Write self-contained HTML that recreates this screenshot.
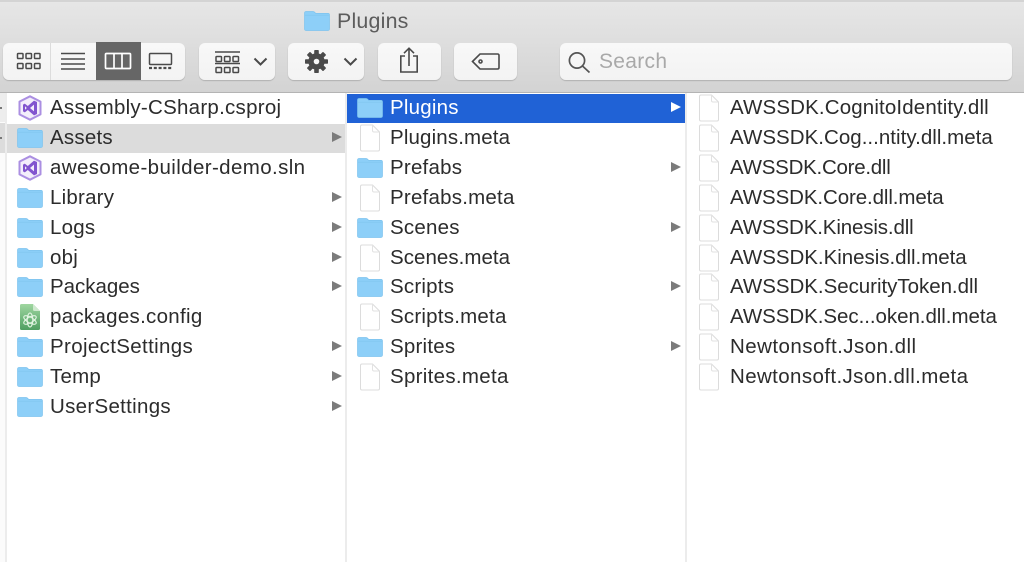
<!DOCTYPE html>
<html><head><meta charset="utf-8">
<style>
html,body{margin:0;padding:0;width:1024px;height:562px;overflow:hidden;background:#fff;font-family:"Liberation Sans",sans-serif}
#w{position:absolute;left:0;top:0;width:1024px;height:562px;overflow:hidden;background:#fff;filter:blur(.35px)}
#tb{position:absolute;left:0;top:0;width:1024px;height:92px;background:linear-gradient(#ebebeb 0,#e6e6e6 3px,#d3d3d3 100%);border-bottom:1px solid #b4b4b4}
#tb:before{content:"";position:absolute;left:0;top:0;width:1024px;height:2px;background:#d4d4d4}
.btn{position:absolute;top:43px;height:36px;background:linear-gradient(#f8f8f8,#f3f3f3);border-radius:6px;box-shadow:0 1px 1px #b0b0b0}
.abs{position:absolute}
.t{position:absolute;font-size:20.5px;line-height:30px;height:30px;margin-top:1px;color:#2c2c2c;white-space:nowrap;letter-spacing:.22px}
.c3{letter-spacing:.14px}
.ic{position:absolute}
.arr{position:absolute;width:0;height:0;border-left:10px solid #7b7b7b;border-top:5.5px solid transparent;border-bottom:5.5px solid transparent}
</style></head><body>
<svg width="0" height="0" style="position:absolute">
<defs>
<linearGradient id="gg" x1="0" y1="0" x2="0" y2="1"><stop offset="0" stop-color="#9fd6a0"/><stop offset="1" stop-color="#4f9f62"/></linearGradient>
<symbol id="folder" viewBox="0 0 26 20"><path d="M.5 2.2Q.5 .5 2.2 .5H9Q10 .5 10.8 1.4L11.6 2.4H24Q25.5 2.4 25.5 4V17.8Q25.5 19.5 24 19.5H2Q.5 19.5 .5 17.8Z" fill="#8dcff8" stroke="#7fc4ee" stroke-width=".7"/><path d="M1 4.2H25" stroke="#7fc4ee" stroke-width=".7"/></symbol>
<symbol id="doc" viewBox="0 0 22 28"><path d="M1.5 2.5Q1.5 1 3 1H13.5L20.5 8V25.5Q20.5 27 19 27H3Q1.5 27 1.5 25.5Z" fill="#fff" stroke="#dcdcdc"/><path d="M13.5 1V6.5Q13.5 8 15 8H20.5" fill="none" stroke="#e2e2e2"/></symbol>
<symbol id="vs" viewBox="0 0 24 26"><path d="M12 1.3L22.5 6.6V19.4L12 24.7L1.5 19.4V6.6Z" fill="#f3eefb" stroke="#ab8fe2" stroke-width="2" stroke-linejoin="round"/><path d="M16 5.6L19 7V19L16 20.4L9.8 15L6.8 17.4L5 16.4V9.6L6.8 8.6L9.8 11ZM16 9.6L12 13L16 16.4ZM7 11.2V14.8L8.8 13Z" fill="#8255cf" fill-rule="evenodd"/></symbol>
<symbol id="atom" viewBox="0 0 24 28"><path d="M2 2.5Q2 1 3.5 1H15L22 8V25.5Q22 27 20.5 27H3.5Q2 27 2 25.5Z" fill="url(#gg)"/><path d="M15 1V6.5Q15 8 16.5 8H22" fill="#cfe9cf"/><g fill="none" stroke="#e4f5e4" stroke-width="1.1"><ellipse cx="12" cy="17" rx="7" ry="2.8" transform="rotate(30 12 17)"/><ellipse cx="12" cy="17" rx="7" ry="2.8" transform="rotate(-30 12 17)"/><ellipse cx="12" cy="17" rx="7" ry="2.8" transform="rotate(90 12 17)"/></g></symbol>
</defs></svg>
<div id="w">
<div id="tb"></div>

<!-- title -->
<svg class="ic" style="left:304px;top:11px" width="26" height="20"><use href="#folder" width="26" height="20"/></svg>
<div class="abs" style="left:337px;top:9px;font-size:21.4px;line-height:24px;color:#5c5c5c;letter-spacing:.2px">Plugins</div>

<!-- view segmented -->
<div class="btn" style="left:3px;width:182px;height:37px"></div>
<div class="abs" style="left:50px;top:43px;width:1px;height:37px;background:#dcdcdc"></div>
<div class="abs" style="left:96px;top:42px;width:45px;height:38px;background:#666"></div>
<svg class="ic" style="left:3px;top:43px" width="182" height="37" fill="none" stroke="#4a4a4a" stroke-width="1.5">
<rect x="14.5" y="10.5" width="5.5" height="5" rx=".8"/><rect x="23" y="10.5" width="5.5" height="5" rx=".8"/><rect x="31.5" y="10.5" width="5.5" height="5" rx=".8"/>
<rect x="14.5" y="20.5" width="5.5" height="5" rx=".8"/><rect x="23" y="20.5" width="5.5" height="5" rx=".8"/><rect x="31.5" y="20.5" width="5.5" height="5" rx=".8"/>
<path d="M58 10.5H82M58 16H82M58 21H82M58 26H82"/>
<rect x="102.5" y="10.5" width="25" height="15" rx="1" stroke="#fff" stroke-width="1.7"/><path d="M111 10.5V25.5M119 10.5V25.5" stroke="#fff" stroke-width="1.7"/>
<rect x="146.5" y="10.5" width="22" height="11" rx="1"/><path d="M146 25H169" stroke-width="2.2" stroke-dasharray="3 1.8"/>
</svg>

<!-- arrange -->
<div class="btn" style="left:199px;width:76px;height:37px"></div>
<svg class="ic" style="left:199px;top:43px" width="76" height="37" fill="none" stroke="#4a4a4a" stroke-width="1.5">
<path d="M16 9H41"/>
<rect x="17" y="13.5" width="5.5" height="5" rx=".8"/><rect x="25.5" y="13.5" width="5.5" height="5" rx=".8"/><rect x="34" y="13.5" width="5.5" height="5" rx=".8"/>
<path d="M16 20.5H41"/>
<rect x="17" y="24.5" width="5.5" height="5" rx=".8"/><rect x="25.5" y="24.5" width="5.5" height="5" rx=".8"/><rect x="34" y="24.5" width="5.5" height="5" rx=".8"/>
<path d="M55.5 15.5L61.5 21.5L67.5 15.5" stroke-width="2"/>
</svg>

<!-- action -->
<div class="btn" style="left:288px;width:76px;height:37px"></div>
<svg class="ic" style="left:288px;top:43px" width="76" height="37">
<g fill="#4a4a4a" transform="translate(28.5 18.5)">
<circle r="8.2"/>
<g><rect x="-2.3" y="-11.5" width="4.6" height="23" rx=".8"/><rect x="-2.3" y="-11.5" width="4.6" height="23" rx=".8" transform="rotate(45)"/><rect x="-2.3" y="-11.5" width="4.6" height="23" rx=".8" transform="rotate(90)"/><rect x="-2.3" y="-11.5" width="4.6" height="23" rx=".8" transform="rotate(135)"/></g>
<circle r="2.8" fill="#f7f7f7"/>
</g>
<path d="M56.5 15.5L62.5 21.5L68.5 15.5" fill="none" stroke="#4a4a4a" stroke-width="2"/>
</svg>

<!-- share -->
<div class="btn" style="left:378px;width:63px;height:37px"></div>
<svg class="ic" style="left:378px;top:43px" width="63" height="37" fill="none" stroke="#4a4a4a" stroke-width="1.6">
<path d="M27 13H22.8V29H39.2V13H35"/><path d="M31 23V5.5M26 10.2L31 5.2L36 10.2"/>
</svg>

<!-- tag -->
<div class="btn" style="left:454px;width:63px;height:37px"></div>
<svg class="ic" style="left:454px;top:43px" width="63" height="37" fill="none" stroke="#4a4a4a" stroke-width="1.6">
<path d="M18.5 18.5L26 11H43.5Q45 11 45 12.5V24.5Q45 26 43.5 26H26Z"/><circle cx="26.5" cy="18.5" r="1.5"/>
</svg>

<!-- search -->
<div class="btn" style="left:560px;width:452px;height:37px"></div>
<svg class="ic" style="left:560px;top:43px" width="40" height="37" fill="none" stroke="#555" stroke-width="1.7">
<circle cx="17" cy="17.5" r="7.6"/><path d="M22.5 23L29.5 29.5"/>
</svg>
<div class="abs" style="left:599px;top:49px;font-size:21px;line-height:26px;color:#a9a9a9;letter-spacing:.3px">Search</div>

<!-- columns -->
<div class="abs" style="left:0;top:93px;width:5px;height:469px;background:#fbfbfb"></div>
<div class="abs" style="left:0;top:93px;width:5px;height:29px;background:#ededed"></div>
<div class="abs" style="left:0;top:123px;width:5px;height:30px;background:#dcdcdc"></div>
<div class="abs" style="left:5px;top:93px;width:2px;height:469px;background:#ececec"></div>
<div class="abs" style="left:345px;top:93px;width:2px;height:469px;background:#ececec"></div>
<div class="abs" style="left:685px;top:93px;width:2px;height:469px;background:#ececec"></div>
<div class="abs" style="left:0;top:107px;width:2px;height:2px;background:#777"></div>
<div class="abs" style="left:0;top:137px;width:2px;height:2px;background:#777"></div>

<div class="abs" style="left:7px;top:124px;width:338px;height:29px;background:#dcdcdc"></div>
<div class="abs" style="left:347px;top:94px;width:338px;height:29px;background:#2062d6"></div>

<!-- column 1 -->
<svg class="ic" style="left:18px;top:95px" width="24" height="26"><use href="#vs" width="24" height="26"/></svg>
<div class="t" style="left:50px;top:92px;letter-spacing:.26px">Assembly-CSharp.csproj</div>
<svg class="ic" style="left:17px;top:128px" width="26" height="20"><use href="#folder" width="26" height="20"/></svg>
<div class="t" style="left:50px;top:122px">Assets</div>
<svg class="ic" style="left:18px;top:155px" width="24" height="26"><use href="#vs" width="24" height="26"/></svg>
<div class="t" style="left:50px;top:152px;letter-spacing:.39px">awesome-builder-demo.sln</div>
<svg class="ic" style="left:17px;top:188px" width="26" height="20"><use href="#folder" width="26" height="20"/></svg>
<div class="t" style="left:50px;top:182px">Library</div>
<svg class="ic" style="left:17px;top:218px" width="26" height="20"><use href="#folder" width="26" height="20"/></svg>
<div class="t" style="left:50px;top:212px">Logs</div>
<svg class="ic" style="left:17px;top:248px" width="26" height="20"><use href="#folder" width="26" height="20"/></svg>
<div class="t" style="left:50px;top:242px">obj</div>
<svg class="ic" style="left:17px;top:277px" width="26" height="20"><use href="#folder" width="26" height="20"/></svg>
<div class="t" style="left:50px;top:271px;letter-spacing:-.03px">Packages</div>
<svg class="ic" style="left:18px;top:303px" width="24" height="28"><use href="#atom" width="24" height="28"/></svg>
<div class="t" style="left:50px;top:301px;letter-spacing:.29px">packages.config</div>
<svg class="ic" style="left:17px;top:337px" width="26" height="20"><use href="#folder" width="26" height="20"/></svg>
<div class="t" style="left:50px;top:331px;letter-spacing:.35px">ProjectSettings</div>
<svg class="ic" style="left:17px;top:367px" width="26" height="20"><use href="#folder" width="26" height="20"/></svg>
<div class="t" style="left:50px;top:361px">Temp</div>
<svg class="ic" style="left:17px;top:397px" width="26" height="20"><use href="#folder" width="26" height="20"/></svg>
<div class="t" style="left:50px;top:391px;letter-spacing:.3px">UserSettings</div>

<div class="arr" style="left:332px;top:132px"></div>
<div class="arr" style="left:332px;top:192px"></div>
<div class="arr" style="left:332px;top:222px"></div>
<div class="arr" style="left:332px;top:252px"></div>
<div class="arr" style="left:332px;top:281px"></div>
<div class="arr" style="left:332px;top:341px"></div>
<div class="arr" style="left:332px;top:371px"></div>
<div class="arr" style="left:332px;top:401px"></div>

<!-- column 2 -->
<svg class="ic" style="left:357px;top:98px" width="26" height="20"><use href="#folder" width="26" height="20"/></svg>
<div class="t" style="left:390px;top:92px;color:#fff">Plugins</div>
<svg class="ic" style="left:359px;top:124px" width="22" height="28"><use href="#doc" width="22" height="28"/></svg>
<div class="t" style="left:390px;top:122px;letter-spacing:.14px">Plugins.meta</div>
<svg class="ic" style="left:357px;top:158px" width="26" height="20"><use href="#folder" width="26" height="20"/></svg>
<div class="t" style="left:390px;top:152px">Prefabs</div>
<svg class="ic" style="left:359px;top:184px" width="22" height="28"><use href="#doc" width="22" height="28"/></svg>
<div class="t" style="left:390px;top:182px">Prefabs.meta</div>
<svg class="ic" style="left:357px;top:218px" width="26" height="20"><use href="#folder" width="26" height="20"/></svg>
<div class="t" style="left:390px;top:212px">Scenes</div>
<svg class="ic" style="left:359px;top:244px" width="22" height="28"><use href="#doc" width="22" height="28"/></svg>
<div class="t" style="left:390px;top:242px;letter-spacing:.04px">Scenes.meta</div>
<svg class="ic" style="left:357px;top:277px" width="26" height="20"><use href="#folder" width="26" height="20"/></svg>
<div class="t" style="left:390px;top:271px">Scripts</div>
<svg class="ic" style="left:359px;top:303px" width="22" height="28"><use href="#doc" width="22" height="28"/></svg>
<div class="t" style="left:390px;top:301px">Scripts.meta</div>
<svg class="ic" style="left:357px;top:337px" width="26" height="20"><use href="#folder" width="26" height="20"/></svg>
<div class="t" style="left:390px;top:331px">Sprites</div>
<svg class="ic" style="left:359px;top:363px" width="22" height="28"><use href="#doc" width="22" height="28"/></svg>
<div class="t" style="left:390px;top:361px;letter-spacing:.3px">Sprites.meta</div>

<div class="arr" style="left:671px;top:102px;border-left-color:#fff"></div>
<div class="arr" style="left:671px;top:162px"></div>
<div class="arr" style="left:671px;top:222px"></div>
<div class="arr" style="left:671px;top:281px"></div>
<div class="arr" style="left:671px;top:341px"></div>

<!-- column 3 -->
<svg class="ic" style="left:698px;top:94px" width="22" height="28"><use href="#doc" width="22" height="28"/></svg>
<div class="t c3" style="left:730px;top:92px">AWSSDK.CognitoIdentity.dll</div>
<svg class="ic" style="left:698px;top:124px" width="22" height="28"><use href="#doc" width="22" height="28"/></svg>
<div class="t c3" style="left:730px;top:122px;letter-spacing:.03px">AWSSDK.Cog...ntity.dll.meta</div>
<svg class="ic" style="left:698px;top:154px" width="22" height="28"><use href="#doc" width="22" height="28"/></svg>
<div class="t c3" style="left:730px;top:152px;letter-spacing:-.26px">AWSSDK.Core.dll</div>
<svg class="ic" style="left:698px;top:184px" width="22" height="28"><use href="#doc" width="22" height="28"/></svg>
<div class="t c3" style="left:730px;top:182px;letter-spacing:-.11px">AWSSDK.Core.dll.meta</div>
<svg class="ic" style="left:698px;top:214px" width="22" height="28"><use href="#doc" width="22" height="28"/></svg>
<div class="t c3" style="left:730px;top:212px;letter-spacing:-.14px">AWSSDK.Kinesis.dll</div>
<svg class="ic" style="left:698px;top:244px" width="22" height="28"><use href="#doc" width="22" height="28"/></svg>
<div class="t c3" style="left:730px;top:242px;letter-spacing:-.03px">AWSSDK.Kinesis.dll.meta</div>
<svg class="ic" style="left:698px;top:273px" width="22" height="28"><use href="#doc" width="22" height="28"/></svg>
<div class="t c3" style="left:730px;top:271px;letter-spacing:-.03px">AWSSDK.SecurityToken.dll</div>
<svg class="ic" style="left:698px;top:303px" width="22" height="28"><use href="#doc" width="22" height="28"/></svg>
<div class="t c3" style="left:730px;top:301px;letter-spacing:-.05px">AWSSDK.Sec...oken.dll.meta</div>
<svg class="ic" style="left:698px;top:333px" width="22" height="28"><use href="#doc" width="22" height="28"/></svg>
<div class="t c3" style="left:730px;top:331px;letter-spacing:.46px">Newtonsoft.Json.dll</div>
<svg class="ic" style="left:698px;top:363px" width="22" height="28"><use href="#doc" width="22" height="28"/></svg>
<div class="t c3" style="left:730px;top:361px;letter-spacing:.39px">Newtonsoft.Json.dll.meta</div>
</div>
</body></html>
